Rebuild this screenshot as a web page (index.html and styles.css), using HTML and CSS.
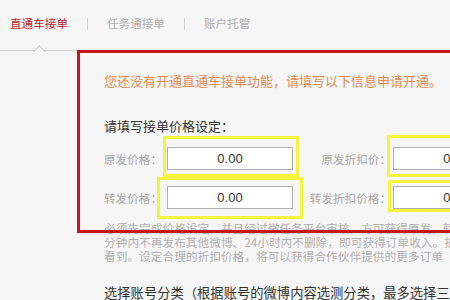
FILE: index.html
```html
<!DOCTYPE html>
<html lang="zh-CN">
<head>
<meta charset="utf-8">
<title>直通车接单</title>
<link rel="stylesheet" href="styles.css">
</head>
<body>
<div class="page">
  <nav class="tabs">
    <span class="tab active">直通车接单<span class="caret"></span></span>
    <span class="sep"></span>
    <span class="tab">任务通接单</span>
    <span class="sep"></span>
    <span class="tab">账户托管</span>
  </nav>
  <main class="content">
    <div class="red-box"></div>
    <p class="notice">您还没有开通直通车接单功能，请填写以下信息申请开通。</p>
    <h2 class="heading">请填写接单价格设定：</h2>
    <div class="row">
      <span class="label">原发价格：</span>
      <span class="field"><span class="mark m1"></span><input class="input" type="text" value="0.00"></span>
      <span class="label label2">原发折扣价：</span>
      <span class="field"><span class="mark m3"></span><input class="input" type="text" value="0.00"></span>
    </div>
    <div class="row row2">
      <span class="label">转发价格：</span>
      <span class="field"><span class="mark m2"></span><input class="input" type="text" value="0.00"></span>
      <span class="label label2">转发折扣价格：</span>
      <span class="field"><span class="mark m4"></span><input class="input" type="text" value="0.00"></span>
    </div>
    <div class="hint">
      <div class="hint-line">必须先完成价格设定，并且经过微任务平台审核，方可获得原发，转</div>
      <div class="hint-line">分钟内不再发布其他微博、24小时内不删除，即可获得订单收入。折</div>
      <div class="hint-line">看到。设定合理的折扣价格，将可以获得合作伙伴提供的更多订单</div>
    </div>
    <p class="section">选择账号分类（根据账号的微博内容选测分类，最多选择三</p>
  </main>
</div>
</body>
</html>
```

FILE: styles.css
```css
html, body {
  margin: 0;
  padding: 0;
  overflow: hidden;
}
body {
  background: #f6f6f6;
  font-family: "Noto Sans CJK SC", "Liberation Sans", sans-serif;
}
.page {
  width: 450px;
  height: 300px;
  overflow: hidden;
  position: relative;
}
.tabs {
  display: flex;
  align-items: center;
  height: 34px;
  padding: 16px 0 0 10px;
  border-bottom: 1px solid #d2d2d2;
  font-size: 11.6px;
  line-height: 14px;
  align-items: flex-start;
}
.tab {
  color: #b0b0b0;
  white-space: nowrap;
  position: relative;
  height: 34px;
}
.tab.active {
  color: #b9262d;
}
.sep {
  display: block;
  width: 1px;
  height: 12px;
  margin: 2px 19px 0;
  background: #cfcfcf;
}
.caret {
  position: absolute;
  left: 25px;
  bottom: -6px;
  width: 8px;
  height: 8px;
  background: #f6f6f6;
  border-left: 1px solid #c8c8c8;
  border-top: 1px solid #c8c8c8;
  transform: rotate(45deg);
}
.content {
  position: relative;
  padding: 20px 0 0 104px;
  white-space: nowrap;
}
.red-box {
  position: absolute;
  left: 77px;
  top: -1px;
  width: 420px;
  height: 183px;
  box-sizing: border-box;
  border: 3px solid #c5161e;
  pointer-events: none;
  z-index: 2;
}
.notice {
  margin: 0;
  font-size: 13px;
  line-height: 20px;
  color: #e38a4f;
}
.heading {
  margin: 25px 0 0;
  font-size: 13px;
  line-height: 20px;
  font-weight: normal;
  color: #333333;
}
.row {
  display: flex;
  align-items: center;
  margin-top: 11px;
  height: 23px;
}
.row2 {
  margin-top: 16px;
}
.label {
  width: 63px;
  font-size: 11.6px;
  color: #a8a8a8;
  flex: none;
}
.label2 {
  width: 98px;
  text-align: right;
  margin-right: 2px;
}
.field {
  position: relative;
  flex: none;
  display: block;
  height: 23px;
}
.input {
  display: block;
  width: 126px;
  height: 23px;
  box-sizing: border-box;
  margin: 0;
  padding: 0;
  border: 1px solid #b0b0b0;
  background: #ffffff;
  text-align: center;
  font-family: "Liberation Sans", Arial, sans-serif;
  font-size: 13px;
  color: #333333;
  outline: none;
}
.mark {
  position: absolute;
  box-sizing: border-box;
  border: 3px solid #f4f43c;
  pointer-events: none;
}
.m1 { left: -4px; top: -11px; width: 136px; height: 41px; }
.m2 { left: -10px; top: -9px; width: 146px; height: 42px; }
.m3 { left: -6px; top: -12px; width: 136px; height: 42px; }
.m4 { left: -5px; top: -6px; width: 136px; height: 32px; }
.hint {
  margin: 12px 0 0;
  font-size: 11.7px;
  color: #b0b0b0;
}
.hint-line {
  height: 14px;
  line-height: 14px;
}
.section {
  margin: 20px 0 0;
  font-size: 13.3px;
  line-height: 20px;
  color: #333333;
}
```
